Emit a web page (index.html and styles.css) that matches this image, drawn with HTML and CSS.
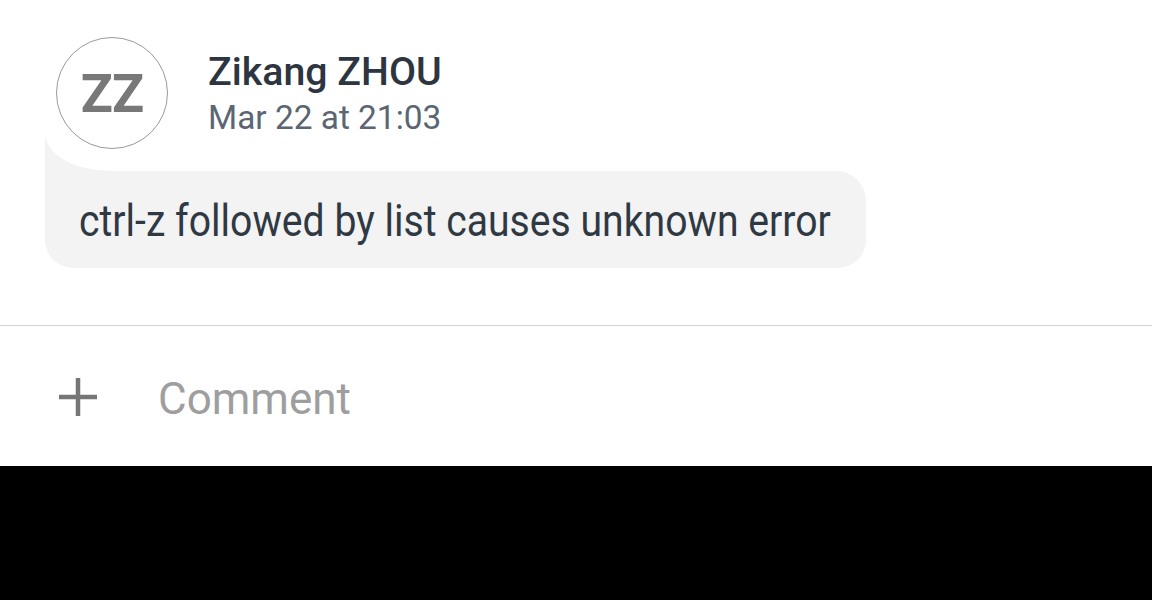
FILE: index.html
```html
<!DOCTYPE html>
<html>
<head>
<meta charset="utf-8">
<link rel="stylesheet" href="styles.css">
</head>
<body>
<div class="screen">
  <div class="post">
    <div class="head">
      <div class="avatar">ZZ</div>
      <div class="meta">
        <div class="name">Zikang ZHOU</div>
        <div class="date">Mar 22 at 21:03</div>
      </div>
    </div>
    <div class="bubble"><span class="msg">ctrl-z followed by list causes unknown error</span></div>
  </div>
  <div class="comment-bar">
    <svg class="plus" width="42" height="42" viewBox="0 0 42 42"><path d="M21 2v38M2 21h38" stroke="#767676" stroke-width="4.5" fill="none"/></svg>
    <span class="comment">Comment</span>
  </div>
</div>
<div class="bottom"></div>
</body>
</html>
```
FILE: styles.css
```css
* { box-sizing: border-box; }
html, body { margin: 0; padding: 0; }
body { width: 1152px; height: 600px; background: #000; font-family: Roboto, "Noto Sans", sans-serif; overflow: hidden; }
.screen { background: #fff; height: 466px; display: flex; flex-direction: column; }
.post { padding: 37px 0 0 45px; height: 325px; }
.head { display: flex; align-items: flex-start; padding-left: 11px; }
.avatar {
  position: relative; z-index: 1;
  width: 112px; height: 112px; border-radius: 50%;
  border: 1px solid #9a9a9a; background: #fff;
  display: flex; align-items: center; justify-content: center;
  font-weight: 700; font-size: 53px; color: #787878; letter-spacing: -1px;
  padding-top: 2px;
}
.meta { margin-left: 40px; padding-top: 12px; }
.name { font-size: 39.3px; font-weight: 500; color: #2c3540; line-height: 46px; }
.date { font-size: 33.4px; color: #5b6672; line-height: 40px; margin-top: 3px; }
.bubble {
  position: relative;
  margin-top: 22px;
  width: 821px; height: 97px;
  background: #f3f3f3;
  border-radius: 0 30px 28px 28px;
  padding-left: 34px;
  display: flex; align-items: center;
  color: #2f3943;
}
.msg {
  display: inline-block; font-size: 44px; line-height: 52px; white-space: nowrap;
  transform: scaleX(0.89); transform-origin: left center; margin-top: 2px;
}
.bubble::before, .bubble::after {
  content: ""; position: absolute; left: 0; top: -38px; width: 90px; height: 38px;
}
.bubble::before { background: #f3f3f3; }
.bubble::after { background: #fff; border-bottom-left-radius: 65px 38px; }
.comment-bar {
  border-top: 1px solid #d3d3d3;
  flex: 1; display: flex; align-items: center; padding-left: 57px;
}
.plus { display: block; margin-top: 2px; }
.comment { margin-left: 59px; font-size: 44px; color: #9e9e9e; margin-top: 5px; }
.bottom { height: 134px; background: #000; }
```
